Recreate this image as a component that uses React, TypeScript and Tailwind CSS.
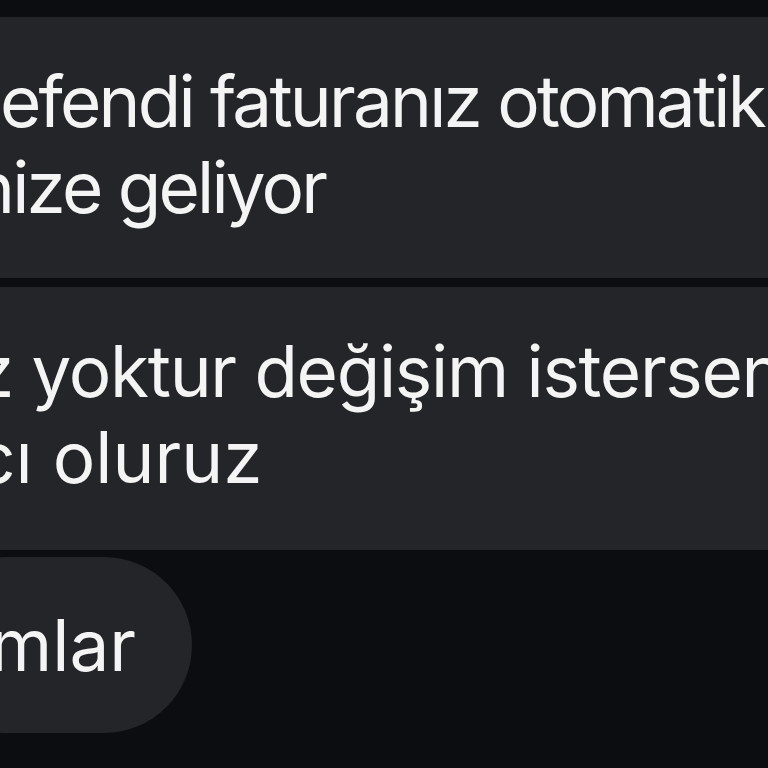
export default function App() {
  const font = { fontFamily: 'Inter, "Noto Sans", sans-serif' };
  return (
    <div
      className="flex h-[768px] w-[768px] flex-col overflow-hidden bg-[#0b0d11] pt-[17px] text-[71px] leading-[86px] text-[#f4f4f5]"
      style={font}
    >
      <div className="h-[261px] shrink-0 bg-[#232529] pt-[41px]">
        <div className="ml-[0px] whitespace-nowrap tracking-[-2.8px]">efendi faturanız otomatik olarak</div>
        <div className="ml-[-27px] whitespace-nowrap tracking-[-2.8px]">nize geliyor</div>
      </div>
      <div className="mt-[9px] h-[263px] shrink-0 bg-[#232529] pt-[41px]">
        <div className="ml-[-25px] whitespace-nowrap tracking-[-1.3px]">z yoktur değişim isterseniz</div>
        <div className="ml-[-25px] whitespace-nowrap tracking-[0px]">cı oluruz</div>
      </div>
      <div className="mt-[7px] ml-[-80px] flex h-[176px] w-[272px] shrink-0 items-center rounded-full bg-[#232529]">
        <div className="ml-[70px] whitespace-nowrap tracking-[0px]">mlar</div>
      </div>
    </div>
  );
}
